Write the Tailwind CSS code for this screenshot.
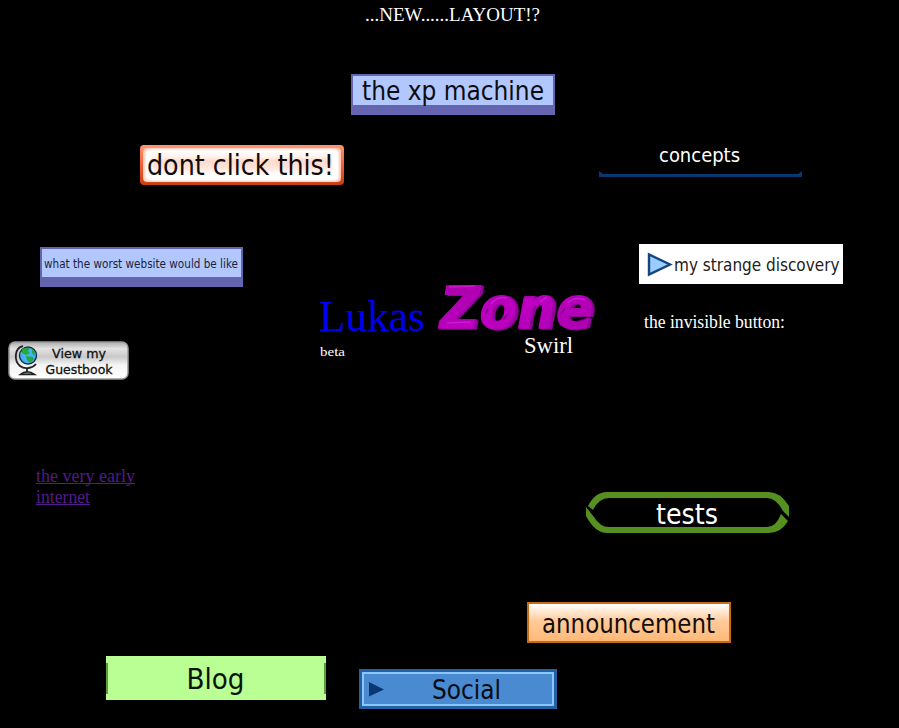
<!DOCTYPE html>
<html lang="en">
<head>
<meta charset="utf-8">
<title>Lukas Zone</title>
<script src="https://cdn.jsdelivr.net/npm/@tailwindcss/browser@4"></script>
</head>
<body class="bg-black text-white font-['Liberation_Serif',serif]">
<main class="relative h-[728px] w-[899px] overflow-hidden bg-black">

  <svg class="absolute left-[360px] top-0" width="190" height="30"><text x="5" y="21" font-size="18" fill="#fff" textLength="175" lengthAdjust="spacingAndGlyphs">...NEW......LAYOUT!?</text></svg>

  <a class="absolute left-[351px] top-[74px] block h-[41px] w-[204px] border-2 border-b-[10px] border-[#6464b0] bg-[#b2c8fc]">
    <svg class="absolute -left-[2px] -top-[2px] font-['DejaVu_Sans_Condensed','DejaVu_Sans',sans-serif]" width="204" height="41"><text x="11" y="26" font-size="26" fill="#0b0b14" textLength="182" lengthAdjust="spacingAndGlyphs">the xp machine</text></svg>
  </a>

  <a class="absolute left-[140px] top-[145px] block">
    <svg class="font-['DejaVu_Sans_Condensed','DejaVu_Sans',sans-serif]" width="204" height="40">
      <defs>
        <linearGradient id="redEdge" x1="0" y1="0" x2="0" y2="1"><stop offset="0" stop-color="#ff9673"/><stop offset=".5" stop-color="#f0613a"/><stop offset="1" stop-color="#c83c10"/></linearGradient>
        <linearGradient id="peach" x1="0" y1="0" x2="0" y2="1"><stop offset="0" stop-color="#fff"/><stop offset=".22" stop-color="#fff4ef"/><stop offset=".36" stop-color="#ffd9cb"/><stop offset=".6" stop-color="#ffe4da"/><stop offset=".8" stop-color="#fff"/><stop offset="1" stop-color="#fff"/></linearGradient>
        <filter id="soft"><feGaussianBlur stdDeviation="1.2"/></filter>
      </defs>
      <rect width="204" height="40" rx="4" fill="url(#redEdge)"/>
      <rect x="3" y="3" width="198" height="34" rx="4" fill="#ffc4ae"/>
      <rect x="5" y="4.500" width="194" height="31" rx="4" fill="#fff" filter="url(#soft)"/>
      <rect x="12" y="5" width="180" height="30" fill="url(#peach)" filter="url(#soft)"/>
      <text x="7" y="30" font-size="28" fill="#100b0b" textLength="187" lengthAdjust="spacingAndGlyphs">dont click this!</text>
    </svg>
  </a>

  <a class="absolute left-[599px] top-[137px] block">
    <svg class="font-['DejaVu_Sans_Condensed','DejaVu_Sans',sans-serif]" width="204" height="41"><path d="M0 34L4 37H199L203 34V40H0Z" fill="#083772"/><text x="60" y="25" font-size="19" fill="#fff" textLength="81" lengthAdjust="spacingAndGlyphs">concepts</text></svg>
  </a>

  <a class="absolute left-[40px] top-[247px] block h-[40px] w-[203px] border-2 border-b-[10px] border-[#6464b0] bg-[#b2c8fc]">
    <svg class="absolute -left-[2px] -top-[2px] font-['DejaVu_Sans_Condensed','DejaVu_Sans',sans-serif]" width="203" height="40"><text x="4" y="20.500" font-size="12" fill="#1c1e3c" textLength="194" lengthAdjust="spacingAndGlyphs">what the worst website would be like</text></svg>
  </a>

  <a class="absolute left-[639px] top-[244px] block h-10 w-[204px] bg-white">
    <svg class="overflow-visible font-['DejaVu_Sans_Condensed','DejaVu_Sans',sans-serif]" width="204" height="40"><path d="M10 10.500V30.500L31 20.500Z" fill="#99ccff" stroke="#17447c" stroke-width="2.400"/><text x="35" y="27" font-size="18" fill="#252020" textLength="165.500" lengthAdjust="spacingAndGlyphs">my strange discovery</text></svg>
  </a>
  <svg class="absolute left-[640px] top-[308px]" width="160" height="30"><text x="4" y="20" font-size="18" fill="#fff" textLength="141" lengthAdjust="spacingAndGlyphs">the invisible button:</text></svg>

  <svg class="absolute left-[310px] top-[275px]" width="300" height="90">
    <defs>
      <linearGradient id="magenta" x1="0" y1="0" x2="1" y2="1"><stop offset="0" stop-color="#a400a4"/><stop offset=".5" stop-color="#be00c2"/><stop offset="1" stop-color="#a800ac"/></linearGradient>
      <filter id="extrude" x="-10%" y="-10%" width="125%" height="125%">
        <feOffset in="SourceAlpha" dx="1" dy="0" result="a"/><feOffset in="SourceAlpha" dx="2" dy="0" result="b"/><feOffset in="SourceAlpha" dx="3" dy="1" result="c"/>
        <feMerge result="m"><feMergeNode in="c"/><feMergeNode in="b"/><feMergeNode in="a"/></feMerge>
        <feFlood flood-color="#92009a"/><feComposite in2="m" operator="in" result="side"/>
        <feMerge><feMergeNode in="side"/><feMergeNode in="SourceGraphic"/></feMerge>
      </filter>
    </defs>
    <text x="9" y="56" font-size="44" fill="#0000f0" textLength="106" lengthAdjust="spacingAndGlyphs">Lukas</text>
    <text x="10" y="81" font-size="13" fill="#fff" textLength="25" lengthAdjust="spacingAndGlyphs">beta</text>
    <text x="214" y="78" font-size="24" fill="#fff" textLength="49" lengthAdjust="spacingAndGlyphs">Swirl</text>
    <g class="font-['DejaVu_Sans',sans-serif] font-bold italic" filter="url(#extrude)" fill="url(#magenta)" stroke="#b400b8" stroke-width="1.500" stroke-linejoin="round">
      <text x="130" y="52.500" font-size="57" textLength="153" lengthAdjust="spacingAndGlyphs">Zone</text>
    </g>
    <path d="M139 12L165 11M137 48L161 47M181 29Q187 21 197 23M230 27L237 22M258 28Q265 21 275 25" fill="none" stroke="#d926dc" stroke-width="1.500" opacity=".65"/>
    <path d="M175 39L178 34M193 45L198 39M221 49L225 39M251 39L255 33M265 47L275 44" fill="none" stroke="#68006e" stroke-width="1.500" opacity=".7"/>
  </svg>

  <a class="absolute left-[8px] top-[341px] block">
    <svg class="font-['DejaVu_Sans',sans-serif]" width="121" height="39">
      <defs><linearGradient id="silver" x1="0" y1="0" x2="0" y2="1"><stop offset="0" stop-color="#aaa"/><stop offset=".18" stop-color="#e2e2e2"/><stop offset=".4" stop-color="#c9c9c9"/><stop offset=".62" stop-color="#f4f4f4"/><stop offset="1" stop-color="#fff"/></linearGradient></defs>
      <rect x="1" y="1" width="119" height="37" rx="6" fill="url(#silver)" stroke="#999" stroke-width="1.500"/>
      <path d="M15 5C6 7 6 20 12 25C17 29 25 27 28 23M19 27V32" fill="none" stroke="#222" stroke-width="1.800"/>
      <path d="M12 33.500Q19 28 27 33.500Z" fill="#399fca" stroke="#222" stroke-width="1.300"/>
      <circle cx="20" cy="14.500" r="8.500" fill="#45b2f2" stroke="#16304a" stroke-width="1.400"/>
      <path d="M14 8Q18 6 22 7L20 10L22 12L18 14L14 12ZM18 15L25 16L26 18L22 22L19 19ZM24 8L27 12L26 15L24 12Z" fill="#27a83e"/>
      <text x="44" y="17" font-size="12.500" fill="#111" stroke="#111" stroke-width=".3" textLength="54" lengthAdjust="spacingAndGlyphs">View my</text>
      <text x="37.500" y="32.500" font-size="12.500" fill="#111" stroke="#111" stroke-width=".3" textLength="67" lengthAdjust="spacingAndGlyphs">Guestbook</text>
    </svg>
  </a>

  <a class="absolute left-[36px] top-[465px] block">
    <svg width="104" height="46" fill="#551a8b" font-size="18"><text x="0" y="17" textLength="99" lengthAdjust="spacingAndGlyphs">the very early</text><text x="0" y="38" textLength="54" lengthAdjust="spacingAndGlyphs">internet</text><path d="M0 18h99v1H0zM0 39h54v1H0z"/></svg>
  </a>

  <a class="absolute left-[586px] top-[492px] block">
    <svg class="font-['DejaVu_Sans_Condensed','DejaVu_Sans',sans-serif]" width="204" height="42">
      <path d="M2 14Q9 0 21 0H183Q194 0 203 14V25L197 19Q190 6 181 6H23Q13 6 7 18Z" fill="#559020"/>
      <path d="M0 15L8 25Q14 35 23 35H181Q190 35 195 22L202 29Q195 41 183 41H21Q9 41 0 24Z" fill="#559020"/>
      <text x="70" y="31.500" font-size="28.500" fill="#fff" textLength="62" lengthAdjust="spacingAndGlyphs">tests</text>
    </svg>
  </a>

  <a class="absolute left-[527px] top-[602px] block h-[41px] w-[204px] border-2 border-[#c96a14] bg-linear-to-b from-white via-[#ffcb9a] via-45% to-[#ffb978]">
    <svg class="absolute -left-[2px] -top-[2px] font-['DejaVu_Sans_Condensed','DejaVu_Sans',sans-serif]" width="204" height="41"><text x="15" y="30.500" font-size="27" fill="#140d08" textLength="173" lengthAdjust="spacingAndGlyphs">announcement</text></svg>
  </a>

  <a class="absolute left-[106px] top-[656px] block">
    <svg class="font-['DejaVu_Sans_Condensed','DejaVu_Sans',sans-serif]" width="220" height="44"><rect width="220" height="44" fill="#b9ff93"/><path d="M0 7h2v31H0zM218 7h2v31h-2z" fill="#5c9c3c"/><text x="80.500" y="33" font-size="29" fill="#0b1208" textLength="58" lengthAdjust="spacingAndGlyphs">Blog</text></svg>
  </a>

  <a class="absolute left-[359px] top-[669px] block h-10 w-[198px] border-[3px] border-[#2460a6] bg-[#4a8ad0]">
    <svg class="absolute -left-[3px] -top-[3px] font-['DejaVu_Sans_Condensed','DejaVu_Sans',sans-serif]" width="198" height="40"><rect x="4" y="4" width="190" height="32" fill="none" stroke="#8ac6ff" stroke-width="2"/><path d="M10 13V27.500L25 20.500Z" fill="#083772"/><text x="73" y="29.500" font-size="26.500" fill="#080c12" textLength="69" lengthAdjust="spacingAndGlyphs">Social</text></svg>
  </a>
</main>
</body>
</html>
